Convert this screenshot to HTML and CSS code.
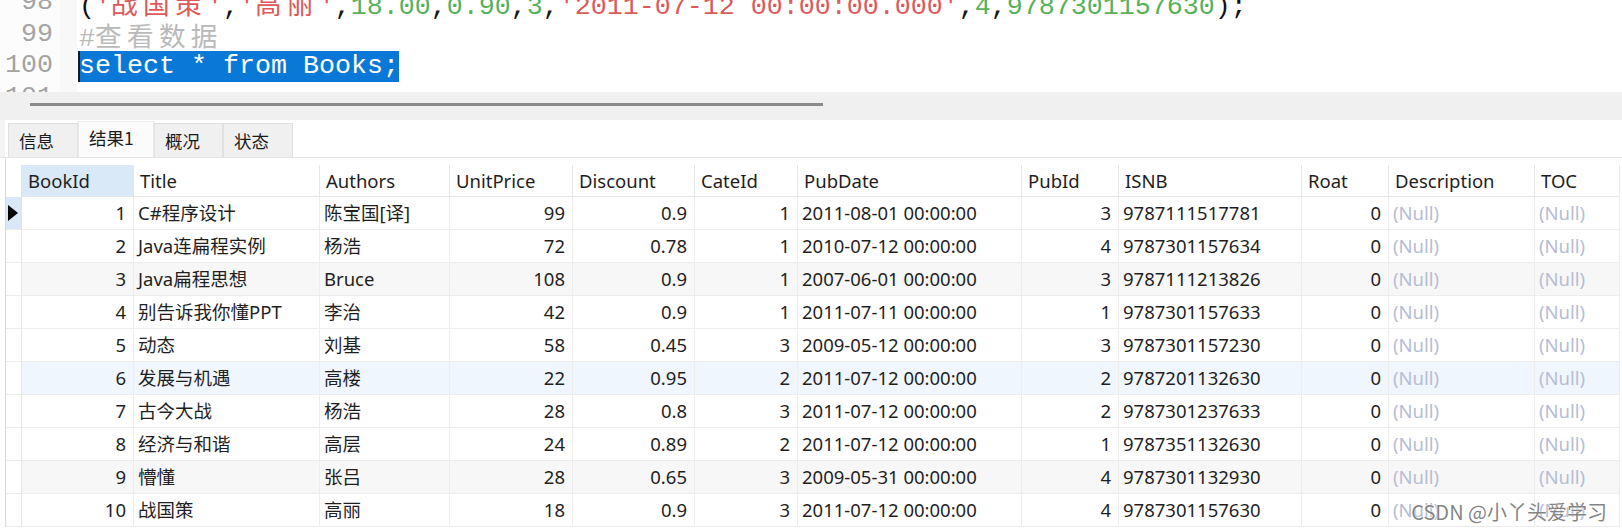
FILE: index.html
```html
<!DOCTYPE html>
<html lang="zh">
<head>
<meta charset="utf-8">
<title>Navicat 查询结果</title>
<link rel="stylesheet" href="styles.css">
</head>
<body>
<div class="editor">
  <div class="gutter">
    <div class="lines">
      <div class="ln">98</div>
      <div class="ln">99</div>
      <div class="ln">100</div>
      <div class="ln">101</div>
    </div>
  </div>
  <div class="fold"></div>
  <div class="code">
    <div class="lines">
      <div class="cl"><span class="p">(</span><span class="s">'<span class="w">战国策</span>'</span><span class="p">,</span><span class="s">'<span class="w">高丽</span>'</span><span class="p">,</span><span class="n">18.00</span><span class="p">,</span><span class="n">0.90</span><span class="p">,</span><span class="n">3</span><span class="p">,</span><span class="s">'2011-07-12 00:00:00.000'</span><span class="p">,</span><span class="n">4</span><span class="p">,</span><span class="n">9787301157630</span><span class="p">);</span></div>
      <div class="cl"><span class="cm">#<span class="w">查看数据</span></span></div>
      <div class="cl"><span class="sel">select * from Books;</span></div>
      <div class="cl"></div>
    </div>
  </div>
</div>
<div class="band"><div class="thumb"></div></div>
<div class="tabs">
  <div class="tab">信息</div>
  <div class="tab active">结果1</div>
  <div class="tab">概况</div>
  <div class="tab">状态</div>
</div>
<div class="results">
  <div class="gridwrap">
    <div class="row head">
      <div class="ind"></div>
      <div class="hc focus">BookId</div>
      <div class="hc">Title</div>
      <div class="hc">Authors</div>
      <div class="hc">UnitPrice</div>
      <div class="hc">Discount</div>
      <div class="hc">CateId</div>
      <div class="hc">PubDate</div>
      <div class="hc">PubId</div>
      <div class="hc">ISNB</div>
      <div class="hc">Roat</div>
      <div class="hc">Description</div>
      <div class="hc">TOC</div>
    </div>
    <div class="row">
      <div class="ind cur"><span class="tri"></span></div>
      <div class="c r">1</div><div class="c">C#程序设计</div><div class="c">陈宝国[译]</div><div class="c r">99</div><div class="c r">0.9</div><div class="c r">1</div><div class="c">2011-08-01 00:00:00</div><div class="c r">3</div><div class="c">9787111517781</div><div class="c r">0</div><div class="c nul">(Null)</div><div class="c nul">(Null)</div>
    </div>
    <div class="row">
      <div class="ind"></div>
      <div class="c r">2</div><div class="c">Java连扁程实例</div><div class="c">杨浩</div><div class="c r">72</div><div class="c r">0.78</div><div class="c r">1</div><div class="c">2010-07-12 00:00:00</div><div class="c r">4</div><div class="c">9787301157634</div><div class="c r">0</div><div class="c nul">(Null)</div><div class="c nul">(Null)</div>
    </div>
    <div class="row alt">
      <div class="ind"></div>
      <div class="c r">3</div><div class="c">Java扁程思想</div><div class="c">Bruce</div><div class="c r">108</div><div class="c r">0.9</div><div class="c r">1</div><div class="c">2007-06-01 00:00:00</div><div class="c r">3</div><div class="c">9787111213826</div><div class="c r">0</div><div class="c nul">(Null)</div><div class="c nul">(Null)</div>
    </div>
    <div class="row">
      <div class="ind"></div>
      <div class="c r">4</div><div class="c">别告诉我你懂PPT</div><div class="c">李治</div><div class="c r">42</div><div class="c r">0.9</div><div class="c r">1</div><div class="c">2011-07-11 00:00:00</div><div class="c r">1</div><div class="c">9787301157633</div><div class="c r">0</div><div class="c nul">(Null)</div><div class="c nul">(Null)</div>
    </div>
    <div class="row">
      <div class="ind"></div>
      <div class="c r">5</div><div class="c">动态</div><div class="c">刘基</div><div class="c r">58</div><div class="c r">0.45</div><div class="c r">3</div><div class="c">2009-05-12 00:00:00</div><div class="c r">3</div><div class="c">9787301157230</div><div class="c r">0</div><div class="c nul">(Null)</div><div class="c nul">(Null)</div>
    </div>
    <div class="row hov">
      <div class="ind"></div>
      <div class="c r">6</div><div class="c">发展与机遇</div><div class="c">高楼</div><div class="c r">22</div><div class="c r">0.95</div><div class="c r">2</div><div class="c">2011-07-12 00:00:00</div><div class="c r">2</div><div class="c">9787201132630</div><div class="c r">0</div><div class="c nul">(Null)</div><div class="c nul">(Null)</div>
    </div>
    <div class="row">
      <div class="ind"></div>
      <div class="c r">7</div><div class="c">古今大战</div><div class="c">杨浩</div><div class="c r">28</div><div class="c r">0.8</div><div class="c r">3</div><div class="c">2011-07-12 00:00:00</div><div class="c r">2</div><div class="c">9787301237633</div><div class="c r">0</div><div class="c nul">(Null)</div><div class="c nul">(Null)</div>
    </div>
    <div class="row">
      <div class="ind"></div>
      <div class="c r">8</div><div class="c">经济与和谐</div><div class="c">高层</div><div class="c r">24</div><div class="c r">0.89</div><div class="c r">2</div><div class="c">2011-07-12 00:00:00</div><div class="c r">1</div><div class="c">9787351132630</div><div class="c r">0</div><div class="c nul">(Null)</div><div class="c nul">(Null)</div>
    </div>
    <div class="row alt">
      <div class="ind"></div>
      <div class="c r">9</div><div class="c">懵懂</div><div class="c">张吕</div><div class="c r">28</div><div class="c r">0.65</div><div class="c r">3</div><div class="c">2009-05-31 00:00:00</div><div class="c r">4</div><div class="c">9787301132930</div><div class="c r">0</div><div class="c nul">(Null)</div><div class="c nul">(Null)</div>
    </div>
    <div class="row">
      <div class="ind"></div>
      <div class="c r">10</div><div class="c">战国策</div><div class="c">高丽</div><div class="c r">18</div><div class="c r">0.9</div><div class="c r">3</div><div class="c">2011-07-12 00:00:00</div><div class="c r">4</div><div class="c">9787301157630</div><div class="c r">0</div><div class="c nul">(Null)</div><div class="c nul">(Null)</div>
    </div>
  </div>
</div>
<div class="watermark">CSDN @小丫头爱学习</div>
</body>
</html>
```
FILE: styles.css
```css
html, body {
  margin: 0;
  padding: 0;
}
body {
  width: 1622px;
  height: 530px;
  overflow: hidden;
  background: #ffffff;
  position: relative;
  font-family: "Noto Sans", "Noto Sans CJK SC", sans-serif;
  color: #1f1f1f;
}

/* ---------- SQL editor ---------- */
.editor {
  height: 92px;
  overflow: hidden;
  display: flex;
  background: #ffffff;
}
.gutter {
  width: 60px;
  background: #fcfcfc;
}
.fold {
  width: 17px;
  background: #f8f8f8;
}
.code {
  flex: 1;
  padding-left: 2px;
}
.lines {
  margin-top: -13px;
}
.ln, .cl {
  height: 31.5px;
  line-height: 31.5px;
  font-family: "Liberation Mono", "Noto Sans CJK SC", monospace;
  font-size: 26.67px;
  white-space: pre;
}
.ln {
  text-align: right;
  padding-right: 7px;
  color: #a3a3a3;
}
.cl .w {
  font-family: "Noto Sans CJK SC", sans-serif;
  letter-spacing: 5.3px;
}
.p { color: #111111; }
.s { color: #dc5a5a; }
.n { color: #58b058; }
.cm { color: #bababa; }
.sel {
  display: inline-block;
  line-height: 31px;
  height: 31px;
  vertical-align: top;
  margin-top: 0.5px;
  margin-left: -1px;
  padding-left: 1px;
  background: #0a78d6;
  color: #ffffff;
  box-shadow: inset 2px 0 0 #1a1a1a;
}

/* ---------- splitter band with horizontal scrollbar ---------- */
.band {
  height: 28px;
  box-sizing: border-box;
  padding-top: 11px;
  background: #f0f0f0;
}
.thumb {
  margin-left: 30px;
  width: 793px;
  height: 3px;
  background: #8a8a8a;
}

/* ---------- tabs ---------- */
.tabs {
  height: 37px;
  display: flex;
  align-items: flex-end;
  padding-left: 8px;
  background: #ffffff;
  box-shadow: inset 5px 0 0 #f3f3f3;
}
.tab {
  height: 34px;
  box-sizing: border-box;
  border: 1px solid #e0e0e0;
  border-bottom: none;
  background: #f0f0f0;
  font-family: "Noto Sans CJK SC", sans-serif;
  font-size: 17.5px;
  color: #1a1a1a;
  display: flex;
  align-items: center;
  padding-left: 10px;
  padding-bottom: 1px;
  width: 70px;
}
.tab.active {
  height: 36px;
  width: 76px;
  background: #fbfbfb;
  padding-left: 10px;
  padding-bottom: 5px;
  border-color: #ececec;
}
.tab:nth-child(3) { width: 69px; }

/* ---------- result grid ---------- */
.results {
  border-top: 1px solid #e4e4e4;
  padding-left: 5px;
}
.gridwrap {
  border-left: 1px solid #d8d8d8;
  padding-top: 7px;
}
.row {
  display: grid;
  grid-template-columns: 16px 112px 186px 130px 123px 122px 103px 224px 97px 183px 87px 146px 85px;
  height: 33px;
}
.row.head {
  height: 32px;
}
.row.alt .c { background: #f7f7f7; }
.row.hov .c { background: #f0f6fd; }

.ind {
  box-sizing: border-box;
  border-bottom: 1px solid #ececec;
  border-right: 1px solid #e4e4e4;
  background: #ffffff;
  display: flex;
  align-items: center;
  padding-left: 2px;
}
.head .ind {
  border-bottom: none;
}
.ind.cur {
  background: #d9e8f7;
}
.tri {
  width: 0;
  height: 0;
  border-left: 10px solid #000000;
  border-top: 8px solid transparent;
  border-bottom: 8px solid transparent;
}

.hc, .c {
  box-sizing: border-box;
  font-size: 18.5px;
  white-space: nowrap;
  overflow: hidden;
}
.hc {
  line-height: 31px;
  border-right: 1px solid #e6e6e6;
  border-bottom: 1px solid #e6e6e6;
  padding-left: 6px;
  color: #1e1e1e;
  background: #ffffff;
}
.hc.focus {
  background: #d9e9f8;
}
.c {
  line-height: 32px;
  border-right: 1px solid #ededed;
  border-bottom: 1px solid #ededed;
  padding: 0 5px 0 4px;
  background: #ffffff;
}
.c.r {
  text-align: right;
  padding-right: 7px;
}
.c.nul {
  color: #b6bdd4;
}

/* ---------- watermark overlay ---------- */
.watermark {
  position: absolute;
  right: 15px;
  bottom: 6px;
  font-family: "Noto Sans CJK SC", sans-serif;
  font-size: 20px;
  line-height: 24px;
  color: rgba(110, 110, 110, 0.85);
  text-shadow: 0 0 2px #ffffff, 0 0 1px #ffffff;
}
```
